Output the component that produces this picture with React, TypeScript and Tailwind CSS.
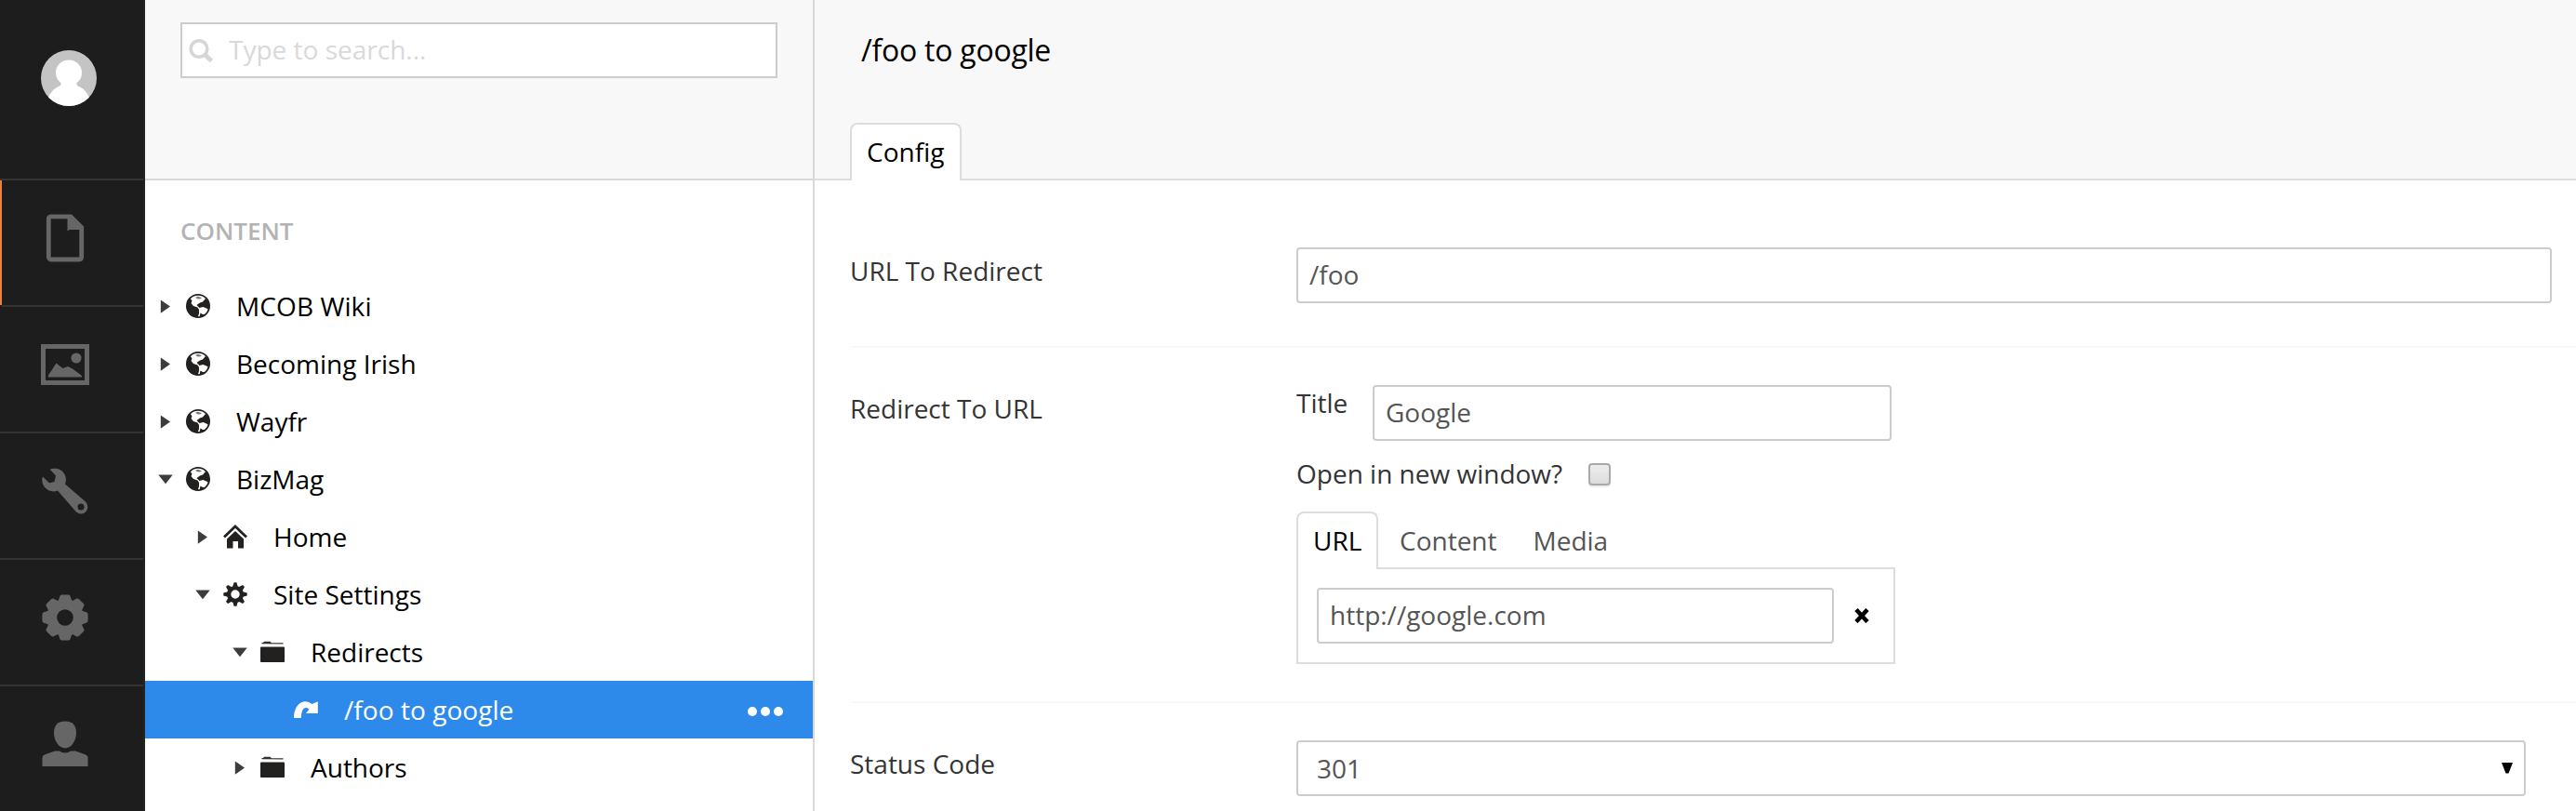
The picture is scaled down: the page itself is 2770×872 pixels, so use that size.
import type { ReactNode } from "react";

const DocumentIcon = () => (
  <svg className="block h-[52px] w-[52px]" viewBox="0 0 52 52" fill="none">
    <path
      d="M10.500 2.800H32L43.700 14.500V46Q43.700 49 41 49H11Q8.300 49 8.300 46V5.500Q8.300 2.800 10.500 2.800Z"
      stroke="#666"
      strokeWidth="4.800"
    />
    <path d="M28.500 3H33L45 14.500V17H30.500L28.500 18.500Z" fill="#666" />
  </svg>
);

const PictureIcon = () => (
  <svg className="block h-[52px] w-[52px]" viewBox="0 0 52 52" fill="none">
    <rect x="2.500" y="6.500" width="47" height="39" stroke="#666" strokeWidth="5" />
    <circle cx="38" cy="19" r="5.600" fill="#666" />
    <path d="M8 39.500V37.500L16.500 24.500L23.500 30L29 28L34 30.500L44 38V39.500Z" fill="#666" />
  </svg>
);

const WrenchIcon = () => (
  <svg className="block h-[52px] w-[52px]" viewBox="0 0 52 52" fill="#666">
    <path
      fillRule="evenodd"
      d="M9.500 2.500C16 .8 22.500 2.500 25.500 8C27.200 11.500 27.500 14.500 26 18.500L48 37.500C51 41 51 45.500 48 48.500C45 51.300 40.500 51 37.500 48L18 25.500C13 27.500 7.500 26 4.200 22C1.300 18.500 .5 14 2 10.500L9 17.200L14.500 16L16 9.500ZM43 39.500A3.500 3.500 0 1 0 43 46.500A3.500 3.500 0 1 0 43 39.500Z"
    />
  </svg>
);

const teeth = [0, 45, 90, 135, 180, 225, 270, 315];

const CogIcon = () => (
  <svg className="block h-[52px] w-[52px]" viewBox="0 0 52 52" fill="#666">
    <circle cx="26" cy="26" r="14.300" fill="none" stroke="#666" strokeWidth="11" />
    {teeth.map((a) => (
      <path key={a} d="M17.800 10L19.800 5Q20.100 1.700 22.500 1.400H29.500Q31.900 1.700 32.200 5L34.200 10Z" transform={`rotate(${a} 26 26)`} />
    ))}
  </svg>
);

const UserIcon = () => (
  <svg className="block h-[52px] w-[52px]" viewBox="0 0 52 52" fill="#666">
    <path d="M26 1.500C34 1.500 38 6 38 14C38 22 33 30.500 26 30.500C19 30.500 14 22 14 14C14 6 18 1.500 26 1.500Z" />
    <path d="M1.500 50V41Q1.500 38 5 37L15 33.500H20C23 36 29 36 32 33.500H37L47 37Q50.500 38 50.500 41V50Z" />
  </svg>
);

const Avatar = () => (
  <svg className="block h-[60px] w-[60px]" viewBox="0 0 60 60">
    <defs>
      <clipPath id="avatar">
        <circle cx="30" cy="30" r="30" />
      </clipPath>
    </defs>
    <g clipPath="url(#avatar)">
      <rect width="60" height="60" fill="#c4c4c4" />
      <path
        fill="#fff"
        d="M30 10.500C38 10.500 44 16.500 44 24C44 29 42 32.500 38.500 35C38 37.500 39.500 38.500 41 39C46 41 50 46 52 51V60H8V51C10 46 14 41 19 39C20.500 38.500 22 37.500 21.500 35C18 32.500 16 29 16 24C16 16.500 22 10.500 30 10.500Z"
      />
    </g>
  </svg>
);

const GlobeIcon = () => (
  <svg className="block h-[26px] w-[26px]" viewBox="0 0 26 26">
    <circle cx="13" cy="13" r="12.100" fill="#fff" stroke="#23211f" strokeWidth="1.800" />
    <path fill="#23211f" d="M4.500 4.500Q2 7 1 10L.6 14Q1 20 6 23.500L12.500 25.500L14 21V17L12.500 14.500L8 13L5.500 10L6.500 7.500Z" />
    <path fill="#23211f" d="M11.500 12L15 9.500L18 8.500L21 5L23 6.500Q25.500 9.500 25.400 13Q25.400 15 24.500 17L22 15.500L18.500 14L14.500 15Z" />
    <path fill="#23211f" d="M15.500 20.500L18 22L21 22L18 24.500L14.500 25Z" />
    <path fill="#777" d="M10 3.800L13 2.800L17 4.200L15 5.500L12 5.200Z" />
  </svg>
);

const HomeIcon = () => (
  <svg className="block h-[26px] w-[26px]" viewBox="0 0 26 26">
    <path d="M1 13.500L13 2L25 13.500" fill="none" stroke="#23211f" strokeWidth="2.800" />
    <path d="M4 15.500L13 7L22 15.500V25.500H16V18H10.500V25.500H4Z" fill="#23211f" />
  </svg>
);

const SettingsIcon = () => (
  <svg className="block h-[26px] w-[26px]" viewBox="0 0 26 26" fill="#23211f">
    <circle cx="13" cy="13" r="6.900" fill="none" stroke="#23211f" strokeWidth="4.400" />
    {teeth.map((a) => (
      <path key={a} d="M10.200 5L11.600 .3H14.400L15.800 5Z" transform={`rotate(${a} 13 13)`} />
    ))}
  </svg>
);

const FolderIcon = () => (
  <svg className="block h-[26px] w-[26px]" viewBox="0 0 26 26">
    <path d="M1.500 4.200V3H3L4 1.800H10.500L12 3.200H24.500V4.600Z" fill="#34322f" />
    <rect x="0" y="7.500" width="26" height="16.500" rx=".8" fill="#23211f" />
  </svg>
);

const RedirectIcon = () => (
  <svg className="block h-[26px] w-[26px]" viewBox="0 0 26 26">
    <path
      fill="#fff"
      d="M0 22C0 12 4.500 5 12 4.200Q16 4 19.500 7L25.800 4.200V17H13L16.500 12.500Q13 10 10.500 12Q8 14.500 7.800 22Z"
    />
  </svg>
);

const SearchIcon = () => (
  <svg className="block h-[28px] w-[28px]" viewBox="0 0 28 28" fill="none" stroke="#d6d6d6">
    <circle cx="12" cy="12.500" r="8.800" strokeWidth="3.600" />
    <path d="M18.500 19L25.500 25.500" strokeWidth="5" />
  </svg>
);

const Caret = ({ open }: { open: boolean }) =>
  open ? (
    <svg className="block h-[16px] w-[16px]" viewBox="0 0 16 16">
      <path d="M.3 3.500H15.700L8 13.300Z" fill="#3c3c3c" />
    </svg>
  ) : (
    <svg className="block h-[16px] w-[16px]" viewBox="0 0 16 16">
      <path d="M2.800 1.400V15.800L13 8.600Z" fill="#3c3c3c" />
    </svg>
  );

function AppNav() {
  const sections = [DocumentIcon, PictureIcon, WrenchIcon, CogIcon, UserIcon];
  return (
    <nav className="h-full w-[156px] shrink-0 overflow-hidden border-r-2 border-[#232323] bg-[#1d1d1d]">
      <div className="h-[194px] border-b-2 border-[#343434] pt-[54px] pl-[44px]">
        <Avatar />
      </div>
      {sections.map((Icon, i) => (
        <div key={i} className="flex h-[136px]">
          <div className={i === 0 ? "h-[134px] w-[2px] bg-[#e8833f]" : "w-[2px] border-b-2 border-[#343434]"} />
          <div className="flex grow items-center border-b-2 border-[#343434] pb-[10px] pl-[42px]">
            <Icon />
          </div>
        </div>
      ))}
    </nav>
  );
}

type Node = { label: string; icon: ReactNode; pad: string; open?: boolean; spacing?: string };

const nodes: Node[] = [
  { label: "MCOB Wiki", icon: <GlobeIcon />, pad: "pl-[14px]", open: false, spacing: "tracking-[0.1px]" },
  { label: "Becoming Irish", icon: <GlobeIcon />, pad: "pl-[14px]", open: false },
  { label: "Wayfr", icon: <GlobeIcon />, pad: "pl-[14px]", open: false },
  { label: "BizMag", icon: <GlobeIcon />, pad: "pl-[14px]", open: true },
  { label: "Home", icon: <HomeIcon />, pad: "pl-[54px]", open: false },
  { label: "Site Settings", icon: <SettingsIcon />, pad: "pl-[54px]", open: true },
  { label: "Redirects", icon: <FolderIcon />, pad: "pl-[94px]", open: true },
  { label: "/foo to google", icon: <RedirectIcon />, pad: "pl-[160px]", spacing: "tracking-[0.05px]" },
  { label: "Authors", icon: <FolderIcon />, pad: "pl-[94px]", open: false },
];

function TreePanel() {
  return (
    <aside className="flex h-full w-[720px] shrink-0 flex-col border-r-2 border-[#d9d9d9] bg-white">
      <div className="h-[194px] shrink-0 border-b-2 border-[#d9d9d9] bg-[#f8f8f8] pt-[24px] pl-[38px]">
        <div className="flex h-[60px] w-[642px] items-center border-2 border-[#ccc] bg-white pl-[6px]">
          <SearchIcon />
          <span className="pb-[2px] pl-[16px] text-[#d9d9d9]">Type to search...</span>
        </div>
      </div>
      <h5 className="pt-[35px] pl-[38px] text-[26px] leading-[38px] font-semibold text-[#b3b3b3]">CONTENT</h5>
      <ul className="pt-[31px]">
        {nodes.map((n) => {
          const selected = n.open === undefined;
          return (
            <li
              key={n.label}
              className={`flex h-[62px] items-center ${n.pad} ${selected ? "bg-[#2e8aea] text-white" : "text-black"}`}
            >
              {n.open !== undefined && (
                <div className="mr-[14px]">
                  <Caret open={n.open} />
                </div>
              )}
              {n.icon}
              <span className={`pl-[28px] whitespace-nowrap ${n.spacing ?? ""}`}>{n.label}</span>
              {selected && (
                <span className="mt-[4px] mr-[32px] ml-auto flex gap-[4px]">
                  <i className="h-[10px] w-[10px] rounded-full bg-white" />
                  <i className="h-[10px] w-[10px] rounded-full bg-white" />
                  <i className="h-[10px] w-[10px] rounded-full bg-white" />
                </span>
              )}
            </li>
          );
        })}
      </ul>
    </aside>
  );
}

function Field({ value, className }: { value: string; className: string }) {
  return (
    <div className={`flex h-[60px] items-center rounded-[4px] border-2 border-[#ccc] bg-white pb-[2px] text-[#555] ${className}`}>
      <span className="pl-[12px]">{value}</span>
    </div>
  );
}

function Property({ label, className, children }: { label: string; className: string; children: ReactNode }) {
  return (
    <section className={`ml-[38px] flex items-start border-[#f8f8f8] ${className}`}>
      <div className="mt-[5px] w-[480px] shrink-0 leading-[40px] text-[#343434]">{label}</div>
      {children}
    </section>
  );
}

function LinkPicker() {
  return (
    <div className="w-[644px] text-[#343434]">
      <div className="flex items-start">
        <span className="w-[82px] leading-[38px]">Title</span>
        <Field value="Google" className="w-[558px]" />
      </div>
      <div className="mt-[16px] flex h-[40px] items-center">
        <span className="w-[314px] pb-[2px]">Open in new window?</span>
        <span className="h-[24px] w-[24px] rounded-[4px] border-2 border-[#a9a9a9] bg-linear-to-b from-[#ededed] to-[#dcdcdc] shadow-[0_2px_1px_#eeeeee]" />
      </div>
      <div className="mt-[20px] flex h-[62px] text-[#555]">
        <div className="relative z-10 w-[88px] rounded-t-[8px] border-2 border-b-0 border-[#ddd] bg-white pl-[16px] leading-[58px] text-black">
          URL
        </div>
        <div className="pl-[23px] leading-[62px]">Content</div>
        <div className="pl-[39px] leading-[62px]">Media</div>
      </div>
      <div className="-mt-[2px] flex h-[104px] items-start border-2 border-[#ddd] pt-[20px] pl-[20px]">
        <Field value="http://google.com" className="w-[556px]" />
        <svg className="mt-[22px] ml-[22px] block h-[16px] w-[16px]" viewBox="0 0 16 16">
          <path d="M2 1.500L14 14.500M14 1.500L2 14.500" stroke="#000" strokeWidth="4.600" />
        </svg>
      </div>
    </div>
  );
}

function Editor() {
  return (
    <main className="flex h-full min-w-0 grow flex-col bg-white">
      <header className="flex h-[194px] shrink-0 flex-col justify-between border-b-2 border-[#ddd] bg-[#f8f8f8]">
        <h1 className="pt-[32px] pl-[50px] text-[32px] leading-[44px] tracking-[-0.25px] text-black">/foo to google</h1>
        <div className="relative -mb-[2px] ml-[38px] h-[62px] w-[120px] rounded-t-[8px] border-2 border-b-0 border-[#ddd] bg-white pl-[16px] leading-[58px] text-black">
          Config
        </div>
      </header>
      <Property label="URL To Redirect" className="h-[180px] border-b-2 pt-[72px]">
        <Field value="/foo" className="w-[1350px]" />
      </Property>
      <Property label="Redirect To URL" className="h-[382px] border-b-2 pt-[40px]">
        <LinkPicker />
      </Property>
      <Property label="Status Code" className="grow pt-[40px]">
        <div className="flex h-[60px] w-[1322px] items-center justify-between rounded-[4px] border-2 border-[#ccc] bg-white pr-[12px] pl-[20px] text-[#555]">
          <span>301</span>
          <svg className="block h-[12px] w-[12px]" viewBox="0 0 12 12">
            <path d="M0 0H12L7.500 11.500H4.500Z" fill="#000" />
          </svg>
        </div>
      </Property>
    </main>
  );
}

export default function App() {
  return (
    <div className="flex h-[872px] w-[2770px] overflow-hidden bg-white font-['Open_Sans',sans-serif] text-[28px] leading-[40px]">
      <AppNav />
      <TreePanel />
      <Editor />
    </div>
  );
}
